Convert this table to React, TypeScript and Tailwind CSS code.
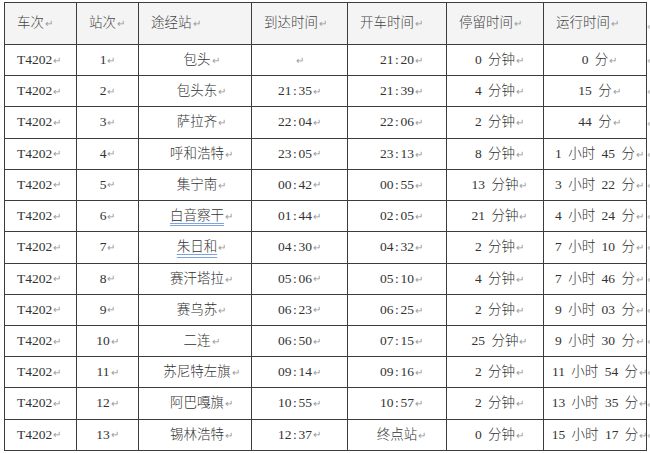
import React from 'react';

type Row = {
  no: string;
  station: string;
  arrive: string;
  depart: string;
  stay: string;
  run: string;
  mark?: boolean;
};

const rows: Row[] = [
  { no: '1', station: '包头', arrive: '', depart: '21:20', stay: '0 分钟', run: '0 分' },
  { no: '2', station: '包头东', arrive: '21:35', depart: '21:39', stay: '4 分钟', run: '15 分' },
  { no: '3', station: '萨拉齐', arrive: '22:04', depart: '22:06', stay: '2 分钟', run: '44 分' },
  { no: '4', station: '呼和浩特', arrive: '23:05', depart: '23:13', stay: '8 分钟', run: '1 小时 45 分' },
  { no: '5', station: '集宁南', arrive: '00:42', depart: '00:55', stay: '13 分钟', run: '3 小时 22 分' },
  { no: '6', station: '白音察干', arrive: '01:44', depart: '02:05', stay: '21 分钟', run: '4 小时 24 分', mark: true },
  { no: '7', station: '朱日和', arrive: '04:30', depart: '04:32', stay: '2 分钟', run: '7 小时 10 分', mark: true },
  { no: '8', station: '赛汗塔拉', arrive: '05:06', depart: '05:10', stay: '4 分钟', run: '7 小时 46 分' },
  { no: '9', station: '赛乌苏', arrive: '06:23', depart: '06:25', stay: '2 分钟', run: '9 小时 03 分' },
  { no: '10', station: '二连', arrive: '06:50', depart: '07:15', stay: '25 分钟', run: '9 小时 30 分' },
  { no: '11', station: '苏尼特左旗', arrive: '09:14', depart: '09:16', stay: '2 分钟', run: '11 小时 54 分' },
  { no: '12', station: '阿巴嘎旗', arrive: '10:55', depart: '10:57', stay: '2 分钟', run: '13 小时 35 分' },
  { no: '13', station: '锡林浩特', arrive: '12:37', depart: '终点站', stay: '0 分钟', run: '15 小时 17 分' },
];

const headers = ['车次', '站次', '途经站', '到达时间', '开车时间', '停留时间', '运行时间'];
const widths = ['w-[72px]', 'w-[62px]', 'w-[113px]', 'w-[96px]', 'w-[99px]', 'w-[97px]', 'w-[103px]'];

// Word's paragraph mark
const Mark = () => (
  <span className="font-['DejaVu_Sans'] text-[10px] text-[#999] ml-[1px]">↵</span>
);

// spread the colon a bit, SimSun digits are fixed width
const Time = ({ value }: { value: string }) => {
  if (!value.includes(':')) return <>{value}</>;
  const [h, m] = value.split(':');
  return (
    <>
      {h}
      <span className="px-[1.5px]">:</span>
      {m}
    </>
  );
};

// text centred on its own, mark hanging after it
const Centered = ({ children }: { children: React.ReactNode }) => (
  <span className="relative">
    {children}
    <span className="absolute left-full top-0">
      <Mark />
    </span>
  </span>
);

export default function App() {
  const cell = 'flex items-center border-r border-b border-[#3c3c3c] shrink-0';

  return (
    <div className="w-[650px] h-[453px] overflow-hidden bg-white font-['Liberation_Serif','Noto_Sans_CJK_SC',serif] font-light text-[13.5px] text-[#333] [word-spacing:3px]">
      <div className="pt-[2px] pl-[4px]">
        <div className="flex">
          <div className="flex border-l border-t border-[#3c3c3c]">
            {headers.map((h, i) => (
              <div key={h} className={`${cell} ${widths[i]} h-[42px] bg-[#f4f4f4] pl-3 text-[#444]`}>
                {h}
                <Mark />
              </div>
            ))}
          </div>
          <div className="pt-[17px] text-[#bbb] font-['DejaVu_Sans'] text-[10px]">↵</div>
        </div>

        {rows.map((r) => (
          <div key={r.no} className="flex">
            <div className="flex border-l border-[#3c3c3c]">
              <div className={`${cell} ${widths[0]} h-[31.23px] pl-[12px]`}>
                T4202
                <Mark />
              </div>
              <div className={`${cell} ${widths[1]} h-[31.23px] justify-center`}>
                {r.no}
                <Mark />
              </div>
              <div className={`${cell} ${widths[2]} h-[31.23px] justify-center pl-[4px]`}>
                <Centered>
                  {r.mark ? (
                    <span className="underline decoration-double decoration-[#7ea3e2] underline-offset-[3px]">
                      {r.station}
                    </span>
                  ) : (
                    r.station
                  )}
                </Centered>
              </div>
              <div className={`${cell} ${widths[3]} h-[31.23px] justify-center`}>
                <Time value={r.arrive} />
                <Mark />
              </div>
              <div className={`${cell} ${widths[4]} h-[31.23px] justify-center`}>
                <Centered>
                  <Time value={r.depart} />
                </Centered>
              </div>
              <div className={`${cell} ${widths[5]} h-[31.23px] justify-center`}>
                <Centered>{r.stay}</Centered>
              </div>
              <div className={`${cell} ${widths[6]} h-[31.23px] justify-center`}>
                <Centered>{r.run}</Centered>
              </div>
            </div>
            <div className="flex items-center text-[#bbb] font-['DejaVu_Sans'] text-[10px]">↵</div>
          </div>
        ))}
      </div>
    </div>
  );
}
